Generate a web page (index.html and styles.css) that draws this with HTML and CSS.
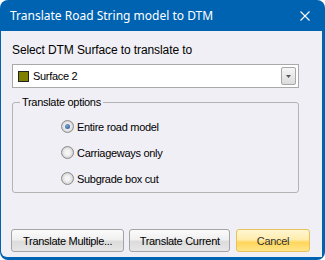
FILE: index.html
```html
<!DOCTYPE html>
<html lang="en">
<head>
  <meta charset="UTF-8">
  <title>Translate Road String model to DTM</title>
  <link rel="stylesheet" href="styles.css">
</head>
<body>

  <div class="window">
    <div class="titlebar">
      <span class="title">Translate Road String model to DTM</span>
      <svg class="close" width="10" height="10" viewBox="0 0 10 10">
        <path d="M0.5 0.5 L9.5 9.5 M9.5 0.5 L0.5 9.5" stroke="#fff" stroke-width="1.1" fill="none"/>
      </svg>
    </div>

    <div class="content">
      <p class="prompt">Select DTM Surface to translate to</p>

      <!-- Surface combo -->
      <div class="combo">
        <span class="swatch"></span>
        <span class="combo-text">Surface 2</span>
        <span class="combo-btn">
          <svg width="5" height="3" viewBox="0 0 5 3"><path d="M0 0 H5 L2.5 3 Z" fill="#555"/></svg>
        </span>
      </div>

      <!-- Options group -->
      <fieldset class="group">
        <legend>Translate options</legend>
        <div class="options">
          <label class="radio"><span class="dot checked"></span>Entire road model</label>
          <label class="radio"><span class="dot"></span>Carriageways only</label>
          <label class="radio"><span class="dot"></span>Subgrade box cut</label>
        </div>
      </fieldset>

      <div class="buttons">
        <button class="btn btn-multi">Translate Multiple...</button>
        <button class="btn btn-current">Translate Current</button>
        <button class="btn btn-cancel">Cancel</button>
      </div>
    </div>
  </div>

</body>
</html>
```

FILE: styles.css
```css
* {
  box-sizing: border-box;
}

body {
  margin: 0;
  width: 325px;
  height: 260px;
  overflow: hidden;
  background: #fff;
  font-family: "Liberation Sans", Arial, sans-serif;
  font-size: 11px;
  color: #000;
}

.window {
  height: 260px;
  background: #0063b1;
  border-radius: 8px;
  padding: 0 3px 3px 1px;
  display: flex;
  flex-direction: column;
}

.titlebar {
  height: 31px;
  display: flex;
  align-items: center;
  justify-content: space-between;
  padding: 0 12px 0 9px;
  color: #fff;
}

.title {
  font-family: "Noto Sans", "Open Sans", sans-serif;
  font-size: 12px;
}

.close {
  display: block;
}

.content {
  flex: 1;
  background: #f0eff5;
  border-radius: 0 0 0 6px;
  padding: 0 12px 0 11px;
  display: flex;
  flex-direction: column;
}

.prompt {
  margin: 12px 0 0 0;
  font-size: 12px;
  line-height: 15px;
  letter-spacing: -0.1px;
}

.combo {
  margin-top: 6px;
  height: 24px;
  width: 287px;
  border: 1px solid #a9a9a9;
  background: #fff;
  display: flex;
  align-items: center;
  padding: 0 2px 0 5px;
}

.swatch {
  width: 11px;
  height: 11px;
  background: #808000;
  border: 1px solid #222;
}

.combo-text {
  flex: 1;
  margin-left: 4px;
  font-size: 11px;
  letter-spacing: -0.3px;
}

.combo-btn {
  width: 15px;
  height: 18px;
  border: 1px solid #a7a7a7;
  border-radius: 2px;
  background: linear-gradient(#f6f6f6, #dcdcdc);
  display: flex;
  align-items: center;
  justify-content: center;
}

.combo-btn svg {
  display: block;
}

.group {
  margin: 8px 0 0 0;
  width: 287px;
  height: 97px;
  border: 1px solid #b4b4b4;
  border-radius: 3px;
  padding: 0;
}

.group legend {
  padding: 0 2px;
  margin-left: 7px;
  font-size: 11px;
  letter-spacing: -0.3px;
}

.options {
  padding: 12px 0 0 48px;
  display: flex;
  flex-direction: column;
  gap: 13px;
}

.radio {
  display: flex;
  align-items: center;
  gap: 3px;
  font-size: 11px;
  letter-spacing: -0.3px;
  height: 13px;
}

.dot {
  width: 13px;
  height: 13px;
  border-radius: 50%;
  border: 1px solid #8a8a8a;
  background: radial-gradient(circle, #f4f4f4 30%, #d2d2d2 75%);
  display: flex;
  align-items: center;
  justify-content: center;
}

.dot.checked::after {
  content: "";
  width: 5px;
  height: 5px;
  border-radius: 50%;
  background: radial-gradient(circle at 40% 35%, #7aa4d8, #1f4f8f);
}

.buttons {
  margin-top: 36px;
  margin-left: -1px;
  display: flex;
  gap: 5px;
}

.btn {
  height: 23px;
  border: 1px solid #a4a4a4;
  border-radius: 3px;
  background: linear-gradient(#fbfbfb 0%, #f0f0f0 45%, #dcdcdc 55%, #e6e6e6 100%);
  font-family: "Liberation Sans", Arial, sans-serif;
  font-size: 11px;
  letter-spacing: -0.3px;
  color: #000;
  padding: 0;
}

.btn-multi {
  width: 115px;
}

.btn-current {
  width: 102px;
}

.btn-cancel {
  width: 75px;
  margin-left: 1px;
  border-color: #e8c25a;
  background: linear-gradient(#fff6d3 0%, #ffecad 45%, #ffd65a 60%, #ffe58c 100%);
  color: #333;
}
```
